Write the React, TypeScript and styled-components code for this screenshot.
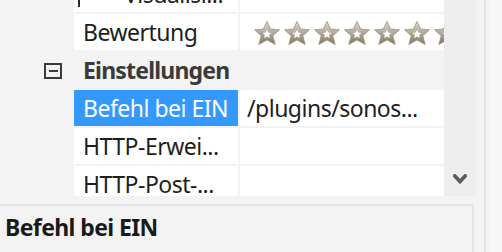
import styled, { createGlobalStyle } from "styled-components";

const GlobalStyle = createGlobalStyle`
  html, body {
    margin: 0;
    padding: 0;
    background: #f3f3f3;
    overflow: hidden;
  }
  body {
    font-family: "Noto Sans", "Open Sans", sans-serif;
    font-size: 23px;
    letter-spacing: -0.5px;
    color: #1e1e1e;
  }
`;

const Window = styled.div`
  width: 502px;
  height: 252px;
  display: flex;
  overflow: hidden;
`;

const Main = styled.div`
  width: 476px;
  display: flex;
  flex-direction: column;
`;

const EdgeStrip = styled.div`
  width: 26px;
  display: flex;
`;

const EdgeBand = styled.div<{ $w: number; $c: string }>`
  width: ${(p) => p.$w}px;
  background: ${(p) => p.$c};
`;

const GridArea = styled.div`
  height: 196px;
  display: flex;
`;

const Viewport = styled.div`
  width: 444px;
  overflow: hidden;
`;

const List = styled.div`
  margin-top: -24px;
  display: flex;
  flex-direction: column;
  gap: 2px;
`;

const Row = styled.div`
  display: grid;
  grid-template-columns: 72px 164px 204px;
  column-gap: 2px;
  height: 36px;
`;

const Gutter = styled.div`
  display: flex;
  align-items: center;
  justify-content: flex-end;
  padding-right: 10px;
`;

const Cell = styled.div<{ $selected?: boolean; $indent?: number }>`
  background: ${(p) => (p.$selected ? "#3399ff" : "#ffffff")};
  color: ${(p) => (p.$selected ? "#ffffff" : "#1e1e1e")};
  padding-left: ${(p) => p.$indent ?? 9}px;
  line-height: 36px;
  white-space: nowrap;
  overflow: hidden;
  position: relative;
`;

const TreeLine = styled.span`
  position: absolute;
  left: 4px;
  top: 14px;
  width: 2px;
  height: 17px;
  background: #2a2a2a;
`;

const CategoryRow = styled.div`
  display: grid;
  grid-template-columns: 72px 370px;
  column-gap: 2px;
  height: 36px;
`;

const CategoryLabel = styled.div`
  padding-left: 9px;
  line-height: 36px;
  font-weight: 700;
  letter-spacing: -0.8px;
  color: #3a3a3a;
`;

const MinusBox = styled.span`
  width: 18px;
  height: 16px;
  margin-top: 2px;
  box-sizing: border-box;
  border: 2px solid #3a3a3a;
  display: flex;
  align-items: center;
  justify-content: center;
  &::after {
    content: "";
    width: 9px;
    height: 2px;
    background: #3a3a3a;
  }
`;

const Stars = styled.div`
  display: flex;
  gap: 4px;
  padding-left: 14px;
  padding-top: 7px;
`;

const ScrollBar = styled.div`
  width: 32px;
  background: #eeeeee;
  display: flex;
  flex-direction: column;
  justify-content: flex-end;
  align-items: center;
  padding-bottom: 10px;
  box-sizing: border-box;
`;

const HelpPanel = styled.div`
  margin-top: 8px;
  margin-right: 2px;
  flex: 1;
  border-top: 2px solid #e3e3e3;
  border-right: 2px solid #e3e3e3;
  padding: 4px 5px 0;
  overflow: hidden;
`;

const HelpTitle = styled.div`
  font-weight: 700;
  line-height: 34px;
  letter-spacing: -0.6px;
  color: #1a1a1a;
`;

const HelpText = styled.div`
  line-height: 34px;
  color: #1e1e1e;
`;

function Star() {
  return (
    <svg width="26" height="24" viewBox="0 0 26 24" style={{ flex: "none" }}>
      <defs>
        <linearGradient id="starGrad" x1="0" y1="0" x2="0" y2="1">
          <stop offset="0" stopColor="#dcd7ca" />
          <stop offset="0.5" stopColor="#b3aa98" />
          <stop offset="1" stopColor="#7f7562" />
        </linearGradient>
      </defs>
      <path
        d="M13 0.5 L16.6 8 L25.5 8.8 L18.8 14.8 L21.2 23.5 L13 19 L4.8 23.5 L7.2 14.8 L0.5 8.8 L9.4 8 Z"
        fill="url(#starGrad)"
        stroke="#9a907e"
        strokeWidth="0.8"
        strokeLinejoin="round"
      />
      <path
        d="M13 9 L14.3 11.6 L17.3 11.9 L15 14 L15.8 17 L13 15.4 L10.2 17 L11 14 L8.7 11.9 L11.7 11.6 Z"
        fill="#ffffff"
      />
    </svg>
  );
}

function Chevron() {
  return (
    <svg width="14" height="12" viewBox="0 0 14 12">
      <polyline
        points="1.8,2 7,7.5 12.2,2"
        fill="none"
        stroke="#5e5e5e"
        strokeWidth="3.8"
        strokeLinecap="square"
      />
    </svg>
  );
}

export default function App() {
  return (
    <>
      <GlobalStyle />
      <Window>
        <Main>
          <GridArea>
            <Viewport>
              <List>
                <Row>
                  <Gutter />
                  <Cell $indent={50}>
                    <TreeLine />
                    Visualisi...
                  </Cell>
                  <Cell />
                </Row>
                <Row>
                  <Gutter />
                  <Cell>Bewertung</Cell>
                  <Cell $indent={0}>
                    <Stars>
                      {Array.from({ length: 7 }).map((_, i) => (
                        <Star key={i} />
                      ))}
                    </Stars>
                  </Cell>
                </Row>
                <CategoryRow>
                  <Gutter>
                    <MinusBox />
                  </Gutter>
                  <CategoryLabel>Einstellungen</CategoryLabel>
                </CategoryRow>
                <Row>
                  <Gutter />
                  <Cell $selected>Befehl bei EIN</Cell>
                  <Cell $indent={7}>/plugins/sonos...</Cell>
                </Row>
                <Row>
                  <Gutter />
                  <Cell>HTTP-Erwei...</Cell>
                  <Cell />
                </Row>
                <Row>
                  <Gutter />
                  <Cell>HTTP-Post-...</Cell>
                  <Cell />
                </Row>
              </List>
            </Viewport>
            <ScrollBar>
              <Chevron />
            </ScrollBar>
          </GridArea>
          <HelpPanel>
            <HelpTitle>Befehl bei EIN</HelpTitle>
            <HelpText>Dieser Text wird beim Einschalten gesendet.</HelpText>
          </HelpPanel>
        </Main>
        <EdgeStrip>
          <EdgeBand $w={8} $c="#f3f3f3" />
          <EdgeBand $w={2} $c="#e3e3e3" />
          <EdgeBand $w={4} $c="#f3f3f3" />
          <EdgeBand $w={12} $c="#f7f7f7" />
        </EdgeStrip>
      </Window>
    </>
  );
}
